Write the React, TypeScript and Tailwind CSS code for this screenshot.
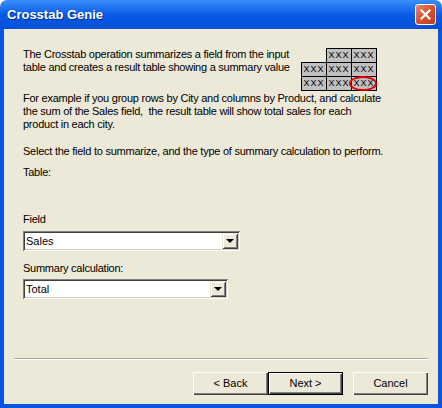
import React from 'react';

const font = { fontFamily: '"Liberation Sans", Arial, sans-serif' };

const Cell = ({ empty }: { empty?: boolean }) =>
  empty ? (
    <div className="w-[25px] h-[14px]" />
  ) : (
    <div className="w-[26px] h-[15px] -mr-px -mb-px bg-[#c0c0c0] border border-black flex items-center justify-center text-[9px] leading-none tracking-[1px] text-black">
      XXX
    </div>
  );

const CrosstabPicture = () => (
  <div className="relative w-[77px] h-[43px]">
    <div className="flex">
      <Cell empty />
      <Cell />
      <Cell />
    </div>
    <div className="flex">
      <Cell />
      <Cell />
      <Cell />
    </div>
    <div className="flex">
      <Cell />
      <Cell />
      <Cell />
    </div>
    {/* red ring round the result cell */}
    <div className="absolute left-[48px] top-[28px] w-[28px] h-[15px] rounded-[50%] border-2 border-[#e00000]" />
  </div>
);

const Combo = ({ value, width }: { value: string; width: string }) => (
  <div
    className={`${width} h-[20px] bg-white flex items-center p-[2px] shadow-[inset_1px_1px_0_#808080,inset_-1px_-1px_0_#ffffff,inset_2px_2px_0_#404040,inset_-2px_-2px_0_#d4d0c8]`}
  >
    <span className="flex-1 pl-[1px] text-[11px] leading-none text-black">{value}</span>
    <div className="w-[16px] h-[16px] bg-[#ece9d8] flex items-center justify-center shadow-[inset_1px_1px_0_#ece9d8,inset_-1px_-1px_0_#404040,inset_2px_2px_0_#ffffff,inset_-2px_-2px_0_#808080]">
      <div className="w-0 h-0 border-l-[4px] border-r-[4px] border-t-[4px] border-l-transparent border-r-transparent border-t-black" />
    </div>
  </div>
);

const Btn = ({ label, primary }: { label: string; primary?: boolean }) => (
  <button
    className={`w-[75px] h-[23px] bg-[#ece9d8] text-[11px] text-black ${
      primary
        ? 'border border-black shadow-[inset_1px_1px_0_#ffffff,inset_-1px_-1px_0_#404040,inset_-2px_-2px_0_#808080]'
        : 'shadow-[inset_1px_1px_0_#ffffff,inset_-1px_-1px_0_#404040,inset_-2px_-2px_0_#808080]'
    }`}
  >
    {label}
  </button>
);

export default function App() {
  return (
    <div className="w-[442px] h-[408px] bg-white flex flex-col" style={font}>
      {/* Title bar */}
      <div className="h-[29px] rounded-t-[7px] bg-gradient-to-b from-[#3b8ef8] via-[#0a5ae8] to-[#0250d8] flex items-center pl-[7px] pr-[6px]">
        <span className="flex-1 text-white font-bold text-[13px] [text-shadow:1px_1px_0_#0a2a8a]">
          Crosstab Genie
        </span>
        <div className="w-[21px] h-[21px] rounded-[3px] border border-white bg-gradient-to-br from-[#e8876a] via-[#d9512c] to-[#c13c1a] flex items-center justify-center">
          <svg width="11" height="11" viewBox="0 0 11 11">
            <path d="M1.5 1.5 L9.5 9.5 M9.5 1.5 L1.5 9.5" stroke="white" strokeWidth="2.2" strokeLinecap="square" />
          </svg>
        </div>
      </div>

      {/* Window body */}
      <div className="flex-1 flex flex-col bg-[#ece9d8] border-l-4 border-r-4 border-b-4 border-[#0a54e2]">
        <div className="flex-1 flex flex-col pl-[19px] pt-[19px] text-[11px] leading-[13px] tracking-[-0.25px] text-black whitespace-nowrap">
          <div className="flex items-start">
            <p className="w-[278px]">
              The Crosstab operation summarizes a field from the input
              <br />
              table and creates a result table showing a summary value
            </p>
            <CrosstabPicture />
          </div>
          <p className="mt-[1px] whitespace-pre">
            {'For example if you group rows by City and columns by Product, and calculate\nthe sum of the Sales field,  the result table will show total sales for each\nproduct in each city.'}
          </p>
          <p className="mt-[14px]">Select the field to summarize, and the type of summary calculation to perform.</p>
          <p className="mt-[8px]">Table:</p>

          <p className="mt-[34px]">Field</p>
          <div className="mt-[5px] tracking-normal">
            <Combo value="Sales" width="w-[217px]" />
          </div>

          <p className="mt-[11px]">Summary calculation:</p>
          <div className="mt-[4px] tracking-normal">
            <Combo value="Total" width="w-[205px]" />
          </div>
        </div>

        {/* Footer */}
        <div className="mx-[10px] border-t border-[#aca899] shadow-[0_1px_0_#ffffff]" />
        <div className="flex justify-end pt-[13px] pb-[9px] pr-[10px]">
          <Btn label="< Back" />
          <Btn label="Next >" primary />
          <div className="w-[10px]" />
          <Btn label="Cancel" />
        </div>
      </div>
    </div>
  );
}
